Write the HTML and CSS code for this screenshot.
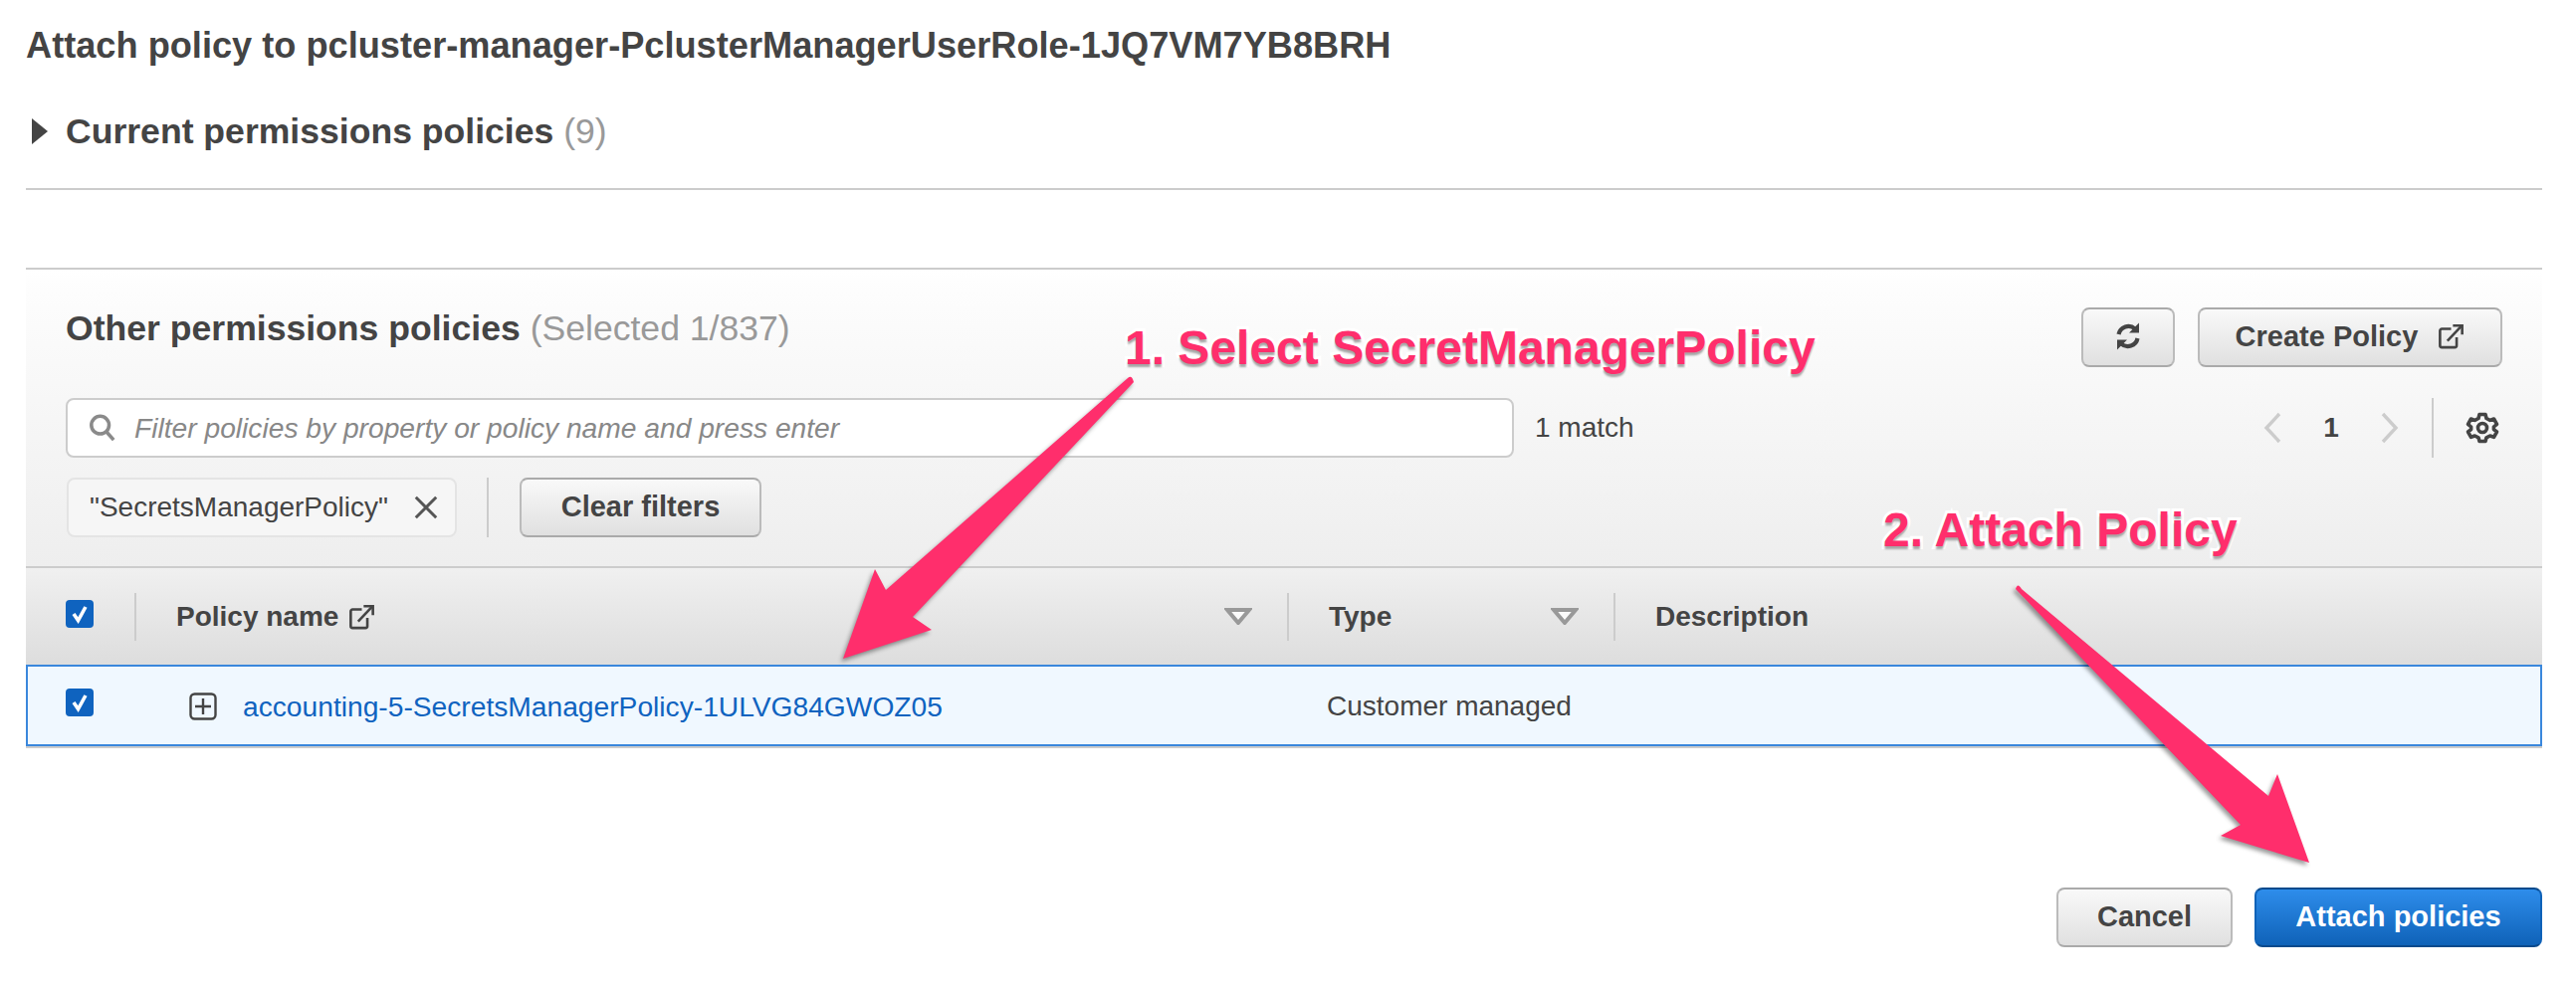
FILE: index.html
```html
<!DOCTYPE html>
<html lang="en">
<head>
<meta charset="utf-8">
<title>Attach policy</title>
<link rel="stylesheet" href="styles.css">
</head>
<body>
<main class="page">
  <h1 class="title">Attach policy to pcluster-manager-PclusterManagerUserRole-1JQ7VM7YB8BRH</h1>
  <section class="current">
    <svg class="caret" viewBox="0 0 16 26"><path d="M0 0 L16 13 L0 26 Z"/></svg>
    <h2 class="sub">Current permissions policies <span class="muted">(9)</span></h2>
  </section>
  <section class="panel">
    <div class="panel-top">
      <h2 class="sub">Other permissions policies <span class="muted">(Selected 1/837)</span></h2>
      <div class="actions">
        <button class="btn btn-icon">
          <svg class="ico" viewBox="0 0 28 30" fill="none" stroke="#444" stroke-width="4.2"><path d="M4.5 13 A10 10 0 0 1 21 7.5"/><path d="M23.5 17 A10 10 0 0 1 7 22.5"/><path d="M25 1.5 V11.5 H15 Z" fill="#444" stroke="none"/><path d="M3 28.5 V18.5 H13 Z" fill="#444" stroke="none"/></svg>
        </button>
        <button class="btn btn-create">Create Policy
          <svg class="ext" viewBox="0 0 28 28" fill="none" stroke="#444" stroke-width="2.8"><path d="M14 6 H4 a2 2 0 0 0 -2 2 V24 a2 2 0 0 0 2 2 H18 a2 2 0 0 0 2 -2 V15"/><path d="M10 19 L25 3"/><path d="M16 2.5 H26 V12"/></svg>
        </button>
      </div>
    </div>
    <div class="filter-row">
      <div class="search">
        <svg class="search-ico" viewBox="0 0 30 30" fill="none" stroke="#8a8a8a" stroke-width="3.8"><circle cx="12.5" cy="12" r="9.5"/><path d="M19 19 L27 28"/></svg>
        <span class="placeholder">Filter policies by property or policy name and press enter</span>
      </div>
      <span class="match">1 match</span>
      <div class="pager">
        <svg class="chev" viewBox="0 0 18 32" fill="none" stroke="#ccc" stroke-width="3.4"><path d="M16 2 L3 16 L16 30"/></svg>
        <span class="page-no">1</span>
        <svg class="chev" viewBox="0 0 18 32" fill="none" stroke="#ccc" stroke-width="3.4"><path d="M2 2 L15 16 L2 30"/></svg>
        <span class="pager-sep"></span>
        <svg class="gear" viewBox="0 0 32 32" fill="none" stroke="#444" stroke-width="3.6"><path d="M13 2.5 H19 L20 6.5 L23.6 8.4 L27.5 7 L30.5 12.3 L27.4 15 V17.6 L30.5 20 L27.5 25.3 L23.6 24 L20 25.8 L19 29.5 H13 L12 25.8 L8.4 24 L4.5 25.3 L1.5 20 L4.6 17.6 V15 L1.5 12.3 L4.5 7 L8.4 8.4 L12 6.5 Z" stroke-linejoin="round"/><circle cx="16" cy="16" r="4.5"/></svg>
      </div>
    </div>
    <div class="chip-row">
      <div class="chip">"SecretsManagerPolicy"
        <svg class="chip-x" viewBox="0 0 28 28" fill="none" stroke="#555" stroke-width="3.2"><path d="M3 3 L25 25 M25 3 L3 25"/></svg>
      </div>
      <span class="chip-sep"></span>
      <button class="btn btn-clear">Clear filters</button>
    </div>
    <div class="thead">
      <div class="cell-check"><span class="check"><svg viewBox="0 0 28 28" fill="none" stroke="#fff" stroke-width="3.6"><path d="M8 14 L12.5 20.5 L20 7"/></svg></span></div>
      <div class="th th-name">Policy name
        <svg class="ext" viewBox="0 0 28 28" fill="none" stroke="#444" stroke-width="2.8"><path d="M14 6 H4 a2 2 0 0 0 -2 2 V24 a2 2 0 0 0 2 2 H18 a2 2 0 0 0 2 -2 V15"/><path d="M10 19 L25 3"/><path d="M16 2.5 H26 V12"/></svg>
        <svg class="sort" viewBox="0 0 28 17" fill="#fbfbfb" stroke="#999" stroke-width="4"><path d="M3 2 H25 L14 15 Z"/></svg>
      </div>
      <div class="th th-type">Type
        <svg class="sort" viewBox="0 0 28 17" fill="#fbfbfb" stroke="#999" stroke-width="4"><path d="M3 2 H25 L14 15 Z"/></svg>
      </div>
      <div class="th th-desc">Description</div>
    </div>
    <div class="row">
      <div class="cell-check"><span class="check"><svg viewBox="0 0 28 28" fill="none" stroke="#fff" stroke-width="3.6"><path d="M8 14 L12.5 20.5 L20 7"/></svg></span></div>
      <div class="td td-name">
        <svg class="plus" viewBox="0 0 28 28" fill="none" stroke="#444" stroke-width="2.4"><rect x="1.5" y="1.5" width="25" height="25" rx="4"/><path d="M14 6 V22 M6 14 H22"/></svg>
        <a class="link" href="#">accounting-5-SecretsManagerPolicy-1ULVG84GWOZ05</a>
      </div>
      <div class="td td-type">Customer managed</div>
    </div>
  </section>
  <footer class="footer">
    <button class="btn btn-cancel">Cancel</button>
    <button class="btn btn-primary">Attach policies</button>
  </footer>
</main>

<svg class="arrows" viewBox="0 0 2588 994">
  <path class="arrow" d="M1133 380 Q1137 376 1139 384 L917 620 L936 633 L847 662 L879 572 L890 593 Z"/>
  <path class="arrow" d="M2025 592 Q2027 585 2031 592 L2279 800 L2288 778 L2320 867 L2231 840 L2251 829 Z"/>
</svg>
<div class="note note-1">1. Select SecretManagerPolicy</div>
<div class="note note-2">2. Attach Policy</div>
</body>
</html>
```

FILE: styles.css
```css
* { box-sizing: border-box; }
html, body { margin: 0; height: 994px; background: #fff; overflow: hidden; }
body { position: relative; font-family: "Liberation Sans", Arial, sans-serif; color: #444; font-size: 28px; }
.page { padding: 0 34px 0 26px; }
.title { margin: 0; height: 90px; padding-top: 26px; font-size: 36.2px; line-height: 40px; font-weight: 700; color: #444; }
.current { display: flex; align-items: center; gap: 18px; height: 101px; padding: 0 0 15px 6px; border-bottom: 2px solid #ccc; margin-bottom: 78px; }
.caret { width: 16px; height: 26px; fill: #444; flex: none; }
.sub { margin: 0; font-size: 35.6px; line-height: 40px; font-weight: 700; color: #444; }
.muted { font-weight: 400; color: #999; }
.panel { border-top: 2px solid #ccc; background: linear-gradient(#fff 0, #fdfdfd 20px, #eee 298px); background-size: 100% 298px; background-repeat: no-repeat; }
.panel-top { display: flex; justify-content: space-between; align-items: flex-start; padding: 39px 40px 0 40px; height: 129px; }
.actions { display: flex; gap: 23px; margin-top: -1px; }
.btn { font-family: inherit; font-size: 29px; font-weight: 700; color: #444; background: linear-gradient(#f9f9f9, #e0e0e0); border: 2px solid #bbb; border-top-color: #aaa; border-bottom-color: #aaa; border-radius: 8px; height: 60px; padding: 0 0 2px; display: inline-flex; align-items: center; justify-content: center; }
.btn-icon { width: 94px; }
.ico { width: 28px; height: 30px; }
.btn-create { width: 306px; gap: 20px; }
.ext { width: 27px; height: 26px; flex: none; }
.filter-row { display: flex; align-items: center; height: 60px; padding: 0 43px 0 40px; margin-bottom: 20px; }
.search { width: 1455px; height: 60px; background: #fff; border: 2px solid #ccc; border-radius: 8px; display: flex; align-items: center; padding-left: 20px; gap: 17px; }
.search-ico { width: 30px; height: 28px; flex: none; }
.placeholder { font-style: italic; color: #888; font-size: 28.2px; }
.match { margin-left: 21px; font-size: 28px; color: #444; }
.pager { margin-left: auto; display: flex; align-items: center; height: 60px; }
.chev { width: 18px; height: 32px; }
.page-no { width: 100px; text-align: center; font-weight: 700; font-size: 28px; }
.pager-sep { width: 2px; height: 60px; background: #ccc; margin: 0 32px 0 33px; }
.gear { width: 34px; height: 32px; }
.chip-row { display: flex; align-items: center; height: 60px; padding-left: 41px; margin-bottom: 29px; }
.chip { width: 392px; height: 60px; background: #f6f6f6; border: 2px solid #e4e4e4; border-radius: 8px; display: flex; align-items: center; padding-left: 21px; gap: 25px; color: #444; }
.chip-x { width: 26px; height: 26px; flex: none; }
.chip-sep { width: 2px; height: 60px; background: #ccc; margin: 0 31px 0 30px; }
.btn-clear { width: 243px; }
.thead { display: flex; height: 99px; border-top: 2px solid #ccc; background: linear-gradient(#f0f0f0, #ddd); align-items: center; }
.cell-check { width: 109px; padding: 0 0 6px 40px; display: flex; height: 48px; align-items: center; flex: none; }
.check { width: 28px; height: 28px; background: #0f63bf; border-radius: 4px; display: block; }
.check svg { display: block; width: 28px; height: 28px; }
.th { height: 48px; display: flex; align-items: center; font-weight: 700; font-size: 28px; border-left: 2px solid #ccc; padding-left: 40px; position: relative; }
.th-name { width: 1158px; gap: 10px; }
.th-type { width: 328px; }
.th-desc { flex: 1; }
.sort { width: 28px; height: 17px; position: absolute; right: 35px; top: 15px; }
.row { display: flex; height: 82px; background: #f0f8ff; border: 2px solid #3a87dc; box-shadow: 0 2px 0 #ccc; align-items: center; }
.row .cell-check { width: 107px; padding-left: 38px; }
.td { font-size: 28px; }
.td-name { width: 1160px; display: flex; align-items: center; gap: 26px; padding-left: 55px; padding-top: 2px; }
.td-type { padding-left: 38px; padding-top: 2px; }
.plus { width: 28px; height: 28px; flex: none; }
.link { color: #0f63bf; text-decoration: none; font-size: 28.2px; }
.footer { display: flex; justify-content: flex-end; gap: 22px; padding-top: 142px; }
.btn-cancel { width: 177px; }
.btn-primary { width: 289px; color: #fff; background: linear-gradient(#2e8deb, #0f62b8); border-color: #0f62b8; border-top-color: #0a4a8c; border-bottom-color: #0a4a8c; }
.arrows { position: absolute; left: 0; top: 0; width: 2588px; height: 994px; pointer-events: none; }
.arrow { fill: #ff2e6c; filter: drop-shadow(-2px 3px 2px rgba(0,0,0,.4)); }
.note { position: absolute; font-weight: 700; font-size: 48px; line-height: 56px; color: #ff2e6c; -webkit-text-stroke: 6px #fff; paint-order: stroke fill; text-shadow: 0 3px 2px rgba(0,0,0,.35); white-space: nowrap; }
.note-1 { left: 1130px; top: 322px; }
.note-2 { left: 1892px; top: 505px; }
```
